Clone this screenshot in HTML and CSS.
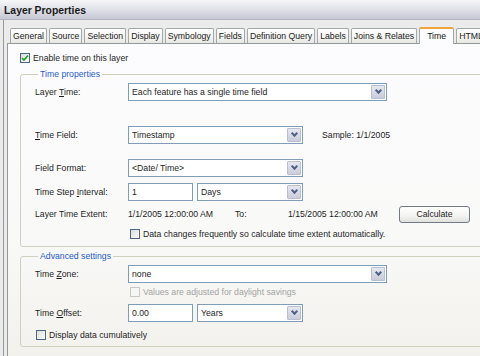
FILE: index.html
```html
<!DOCTYPE html>
<html lang="en">
<head>
	<meta charset="UTF-8">
	<meta name="viewport" content="width=device-width, initial-scale=1.0">
	<title>Layer Properties</title>
	<link rel="stylesheet" href="styles.css">
</head>
<body>
	<div class="title">Layer Properties</div>
	<div class="frame">
		<div class="tabs">
			<div class="tab">General</div>
			<div class="tab">Source</div>
			<div class="tab">Selection</div>
			<div class="tab">Display</div>
			<div class="tab">Symbology</div>
			<div class="tab">Fields</div>
			<div class="tab">Definition Query</div>
			<div class="tab">Labels</div>
			<div class="tab">Joins &amp; Relates</div>
			<div class="tab active">Time</div>
			<div class="tab">HTML Popup</div>
		</div>
		<div class="panel">
			<div class="check-row enable">
				<span class="box checked"><svg viewBox="0 0 8 8" width="8" height="8"><polyline points="1,4 3,6 7,1.5" fill="none" stroke="#21a121" stroke-width="1.7"/></svg></span>
				Enable time on this layer
			</div>

			<fieldset class="group time-props">
				<legend>Time properties</legend>
				<div class="row r-layer">
					<label>Layer <u>T</u>ime:</label>
					<div class="select long"><span>Each feature has a single time field</span><i class="arrow"></i></div>
				</div>
				<div class="row r-field">
					<label><u>T</u>ime Field:</label>
					<div class="select mid"><span>Timestamp</span><i class="arrow"></i></div>
					<span class="sample">Sample: 1/1/2005</span>
				</div>
				<div class="row r-format">
					<label>Field Format:</label>
					<div class="select mid"><span>&lt;Date/ Time&gt;</span><i class="arrow"></i></div>
				</div>
				<div class="row r-step">
					<label>Time Step <u>I</u>nterval:</label>
					<div class="input">1</div>
					<div class="select short"><span>Days</span><i class="arrow"></i></div>
				</div>
				<div class="row r-extent">
					<label>Layer Time Extent:</label>
					<span class="from">1/1/2005 12:00:00 AM</span>
					<span class="to">To:</span>
					<span class="until">1/15/2005 12:00:00 AM</span>
					<button class="btn">Calculate</button>
				</div>
				<div class="row check-row r-auto">
					<span class="box"></span>
					Data changes frequently so calculate time extent automatically.
				</div>
			</fieldset>

			<fieldset class="group advanced">
				<legend>Advanced settings</legend>
				<div class="row r-zone">
					<label>Time <u>Z</u>one:</label>
					<div class="select long"><span>none</span><i class="arrow"></i></div>
				</div>
				<div class="row check-row disabled r-dst">
					<span class="box"></span>
					Values are adjusted for daylight savings
				</div>
				<div class="row r-offset">
					<label>Time <u>O</u>ffset:</label>
					<div class="input">0.00</div>
					<div class="select short"><span>Years</span><i class="arrow"></i></div>
				</div>
				<div class="row check-row r-cumul">
					<span class="box"></span>
					Display data cumulatively
				</div>
			</fieldset>
		</div>
	</div>
</body>
</html>
```

FILE: styles.css
```css
*{
	margin: 0;
	padding: 0;
	box-sizing: border-box;
}
body{
	width: 480px;
	height: 356px;
	overflow: hidden;
	background: #ebebeb;
	font-family: "Liberation Sans", Arial, sans-serif;
	font-size: 8.7px;
	color: #1e1e1e;
}
.title{
	height: 20px;
	padding-left: 4px;
	line-height: 21px;
	font-size: 10.4px;
	font-weight: bold;
	color: #1b1b1b;
	background: linear-gradient(#f6f6f8, #e2e3ea 45%, #c6c7d3);
	border-bottom: 1px solid #b2b3bf;
}
.frame{
	margin-left: 3px;
	border-left: 1px solid #9a9a9a;
	padding-left: 3px;
	width: 560px;
	height: 340px;
}

/* tabs */
.tabs{
	display: flex;
	align-items: flex-end;
	gap: 2px;
	height: 23px;
	padding-left: 3px;
}
.tab{
	height: 15px;
	padding: 0 2px;
	line-height: 14px;
	white-space: nowrap;
	color: #222;
	background: linear-gradient(#fefefe, #f4f4f2 60%, #e6e6e2);
	border: 1px solid #a2a9ab;
	border-bottom: none;
	border-radius: 2px 2px 0 0;
}
.tab.active{
	position: relative;
	height: 17px;
	margin-bottom: -1px;
	padding: 0 7px;
	line-height: 15px;
	background: #fcfcfe;
	border-top: 2px solid #f0a43c;
	color: #111;
}

/* panel */
.panel{
	width: 540px;
	height: 320px;
	padding: 9px 12px 0 12px;
	border: 1px solid #919b9c;
	background: linear-gradient(#fcfcfe, #f9f9f8 60%, #f2f1ec);
}
.check-row{
	display: flex;
	align-items: center;
	height: 11px;
	white-space: nowrap;
}
.box{
	width: 10px;
	height: 10px;
	margin-right: 3px;
	flex: none;
	display: flex;
	align-items: center;
	justify-content: center;
	border: 1px solid #4a6688;
	background: linear-gradient(135deg, #dcdcd7, #fdfdfd);
}
.enable{
	height: 10px;
}

/* groups */
.group{
	border: 1px solid #d0d0bf;
	border-radius: 3px;
	padding: 0 14px 7px 14px;
	min-width: 0;
}
.group legend{
	margin-left: 3px;
	padding: 0 2px;
	line-height: 10px;
	color: #1f5bcc;
}
.time-props{
	margin-top: 6px;
}
.advanced{
	margin-top: 4px;
	padding-bottom: 6px;
}
.row{
	display: flex;
	align-items: center;
	height: 18px;
	white-space: nowrap;
}
.row label{
	width: 93px;
	flex: none;
}
.row u{
	text-decoration: underline;
	text-underline-offset: 1px;
}
.r-layer{ margin-top: 4px; }
.r-field{ margin-top: 25px; }
.r-format{ margin-top: 15px; }
.r-step{ margin-top: 6px; }
.r-extent{ margin-top: 4px; }
.r-auto{ margin-top: 5px; height: 11px; padding-left: 95px; }
.r-zone{ margin-top: 4px; }
.r-dst{ margin-top: 3px; height: 11px; padding-left: 95px; }
.r-offset{ margin-top: 7px; }
.r-cumul{ margin-top: 7px; height: 11px; padding-left: 1px; }

.disabled{
	color: #a3a3a3;
}
.disabled .box{
	border-color: #c8c8c8;
	background: #f6f6f4;
}

/* controls */
.select, .input{
	height: 18px;
	border: 1px solid #7f9db9;
	background: #fff;
	display: flex;
	align-items: center;
}
.select span, .input{
	padding-left: 3px;
}
.select span{
	flex: 1;
}
.long{ width: 259px; }
.mid{ width: 175px; }
.short{ width: 106px; margin-left: 4px; }
.input{ width: 65px; }
.arrow{
	width: 14px;
	height: 14px;
	margin-right: 1px;
	flex: none;
	display: flex;
	align-items: center;
	justify-content: center;
	border: 1px solid #b8bfd0;
	border-radius: 1px;
	background: linear-gradient(#e6e8f0, #c9ccd9);
}
.arrow::after{
	content: "";
	width: 3px;
	height: 3px;
	margin-top: -3px;
	border-right: 2px solid #4d6185;
	border-bottom: 2px solid #4d6185;
	transform: rotate(45deg);
}
.sample{
	margin-left: 19px;
}
.from{ width: 107px; }
.to{ width: 53px; }
.until{ width: 111px; }
.btn{
	width: 71px;
	height: 17px;
	font: inherit;
	color: #1e1e1e;
	border: 1px solid #707a88;
	border-radius: 3px;
	background: linear-gradient(#ffffff, #f3f3f1 60%, #e0e0dc);
}
```
